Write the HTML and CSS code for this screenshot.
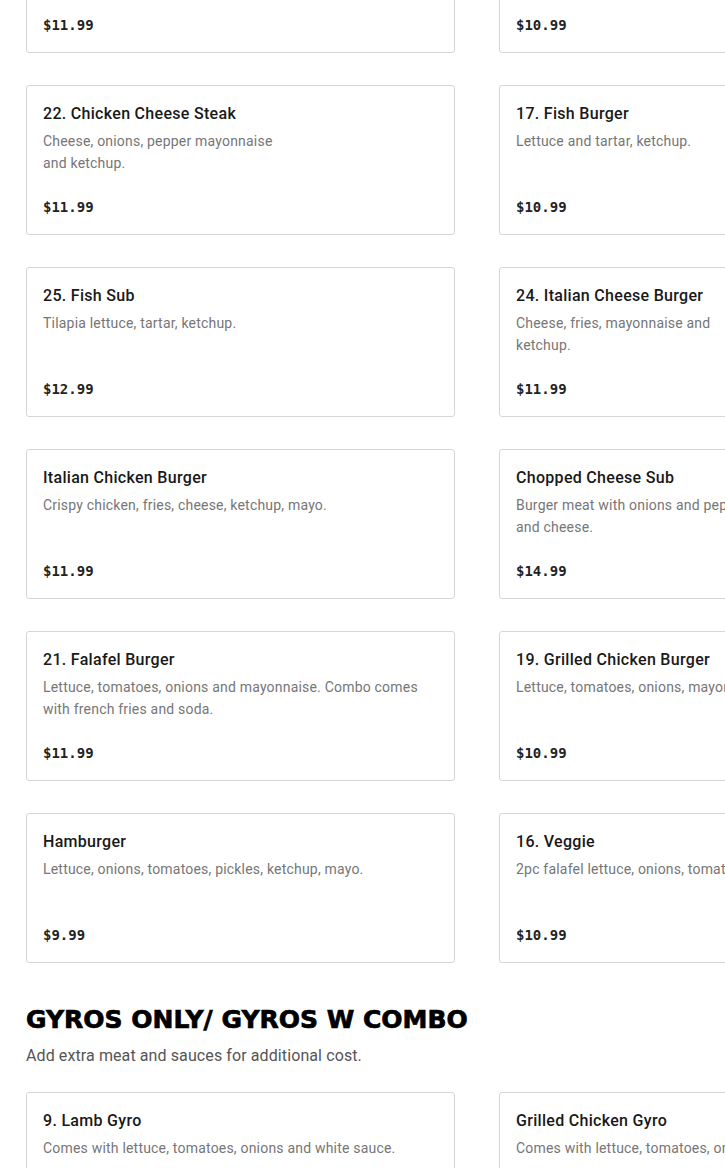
FILE: index.html
```html
<!DOCTYPE html>
<html lang="en">
<head>
    <meta charset="UTF-8">
    <meta name="viewport" content="width=device-width, initial-scale=1.0">
    <title>Menu</title>
    <link rel="stylesheet" href="styles.css">
</head>
<body>

    <!-- Burgers & subs, scrolled part way down -->
    <div class="menu-grid scrolled">
        <div class="item">
            <p class="price">$11.99</p>
        </div>
        <div class="item">
            <p class="price">$10.99</p>
        </div>

        <div class="item has-photo">
            <h3 class="name">22. Chicken Cheese Steak</h3>
            <p class="desc">Cheese, onions, pepper mayonnaise and ketchup.</p>
            <p class="price">$11.99</p>
        </div>
        <div class="item">
            <h3 class="name">17. Fish Burger</h3>
            <p class="desc">Lettuce and tartar, ketchup.</p>
            <p class="price">$10.99</p>
        </div>

        <div class="item">
            <h3 class="name">25. Fish Sub</h3>
            <p class="desc">Tilapia lettuce, tartar, ketchup.</p>
            <p class="price">$12.99</p>
        </div>
        <div class="item has-photo">
            <h3 class="name">24. Italian Cheese Burger</h3>
            <p class="desc">Cheese, fries, mayonnaise and ketchup.</p>
            <p class="price">$11.99</p>
        </div>

        <div class="item">
            <h3 class="name">Italian Chicken Burger</h3>
            <p class="desc">Crispy chicken, fries, cheese, ketchup, mayo.</p>
            <p class="price">$11.99</p>
        </div>
        <div class="item">
            <h3 class="name">Chopped Cheese Sub</h3>
            <p class="desc">Burger meat with onions and peppers, lettuce, tomato, mayo and cheese.</p>
            <p class="price">$14.99</p>
        </div>

        <div class="item">
            <h3 class="name">21. Falafel Burger</h3>
            <p class="desc">Lettuce, tomatoes, onions and mayonnaise. Combo comes with french fries and soda.</p>
            <p class="price">$11.99</p>
        </div>
        <div class="item">
            <h3 class="name">19. Grilled Chicken Burger</h3>
            <p class="desc">Lettuce, tomatoes, onions, mayonnaise and ketchup.</p>
            <p class="price">$10.99</p>
        </div>

        <div class="item">
            <h3 class="name">Hamburger</h3>
            <p class="desc">Lettuce, onions, tomatoes, pickles, ketchup, mayo.</p>
            <p class="price">$9.99</p>
        </div>
        <div class="item">
            <h3 class="name">16. Veggie</h3>
            <p class="desc">2pc falafel lettuce, onions, tomatoes.</p>
            <p class="price">$10.99</p>
        </div>
    </div>

    <!-- Gyros -->
    <div class="section-head">
        <h2>GYROS ONLY/ GYROS W COMBO</h2>
        <p>Add extra meat and sauces for additional cost.</p>
    </div>

    <div class="menu-grid">
        <div class="item">
            <h3 class="name">9. Lamb Gyro</h3>
            <p class="desc">Comes with lettuce, tomatoes, onions and white sauce.</p>
            <p class="price">$10.99</p>
        </div>
        <div class="item">
            <h3 class="name">Grilled Chicken Gyro</h3>
            <p class="desc">Comes with lettuce, tomatoes, onions and white sauce.</p>
            <p class="price">$10.99</p>
        </div>
    </div>

</body>
</html>
```

FILE: styles.css
```css
body {
    margin: 0;
    padding: 0 26px;
    font-family: Roboto, "Noto Sans", sans-serif;
    color: #191919;
    background: #fff;
    overflow: hidden;
}
.menu-grid {
    display: grid;
    grid-template-columns: 429px 429px;
    column-gap: 44px;
    row-gap: 32px;
    width: 902px;
}
/* page is scrolled, first row is mostly above the window */
.scrolled {
    margin-top: -97px;
}
.item {
    box-sizing: border-box;
    height: 150px;
    border: 1px solid #d6d6d6;
    border-radius: 3px;
    padding: 16px;
    display: flex;
    flex-direction: column;
}
.name {
    margin: 0;
    font-size: 16px;
    line-height: 24px;
    font-weight: 500;
    letter-spacing: 0.3px;
    color: #191919;
}
.desc {
    margin: 4px 0 0;
    font-size: 14px;
    line-height: 22px;
    letter-spacing: 0.2px;
    color: #767676;
    display: -webkit-box;
    -webkit-line-clamp: 2;
    -webkit-box-orient: vertical;
    overflow: hidden;
}
.has-photo .desc {
    max-width: 245px;
}
.price {
    margin: auto 0 0;
    font-family: "DejaVu Sans Mono", "Liberation Mono", monospace;
    font-size: 14px;
    line-height: 22px;
    font-weight: bold;
    color: #222;
}
.section-head {
    padding: 33px 0 24px;
}
.section-head h2 {
    margin: 0;
    font-family: "DejaVu Sans", sans-serif;
    font-size: 25px;
    line-height: 48px;
    font-weight: 800;
    -webkit-text-stroke: 0.7px #000;
    color: #000;
}
.section-head p {
    margin: 0;
    font-size: 16px;
    line-height: 24px;
    letter-spacing: 0.1px;
    color: #555;
}
```
